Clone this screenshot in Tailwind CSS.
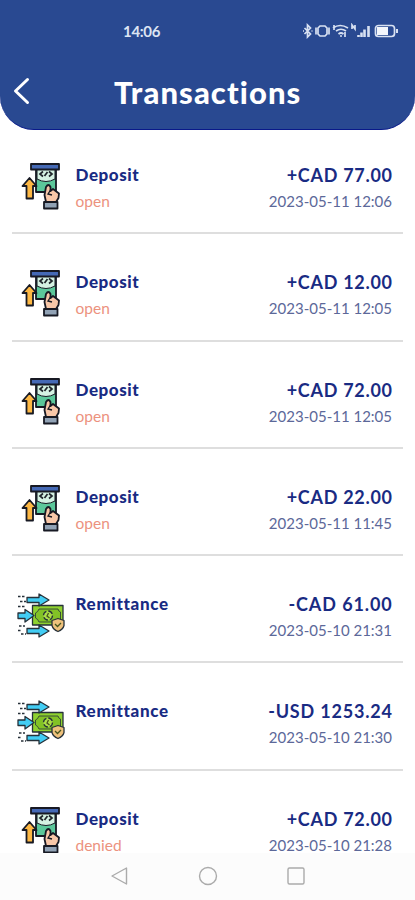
<!DOCTYPE html>
<html lang="en">
<head>
<meta charset="utf-8">
<meta name="viewport" content="width=device-width, initial-scale=1">
<title>Transactions</title>
<script src="https://cdn.jsdelivr.net/npm/@tailwindcss/browser@4"></script>
</head>
<body class="bg-white font-['Lato',sans-serif] [font-variant-ligatures:none]">
<svg class="hidden">
  <symbol id="deposit" viewBox="0 0 48 50">
    <g stroke="#171923" stroke-width="1.800" stroke-linejoin="round">
      <path d="M16 7H36V31H16Z" fill="#5bc79a"/>
      <path d="M17 8H35V18Q26 23 17 18Z" fill="#d5f2e3" stroke-width="1"/>
      <path d="M11 3H39V8.500H11Z" fill="#4569b5"/>
      <path d="M9.500 17L16.500 25H13V37.500H6.500V25H2.500Z" fill="#fdb844"/>
      <path d="M26 41L24.500 34L26 26Q28.500 22 30.500 26V30L33 28L39 32.500L38.500 37L36 41Z" fill="#f8c7a8"/>
      <path d="M24 41H37.500V47.500H24Z" fill="#91a2b5"/>
    </g>
    <path d="M23 10.500L20 13L23 15.500M29 10.500L32 13L29 15.500M24.500 15L27.500 11" fill="none" stroke="#20252b" stroke-width="1.700"/>
    <path d="M30.500 29L28 33L32 34" fill="none" stroke="#171923" stroke-width="1.300"/>
  </symbol>
  <symbol id="remit" viewBox="0 0 48 46">
    <g stroke="#26313a" stroke-width="1.300" stroke-linejoin="round">
      <path d="M15.500 13.500H46V33H15.500Z" fill="#8fd12f"/>
      <path d="M22 17H41Q41.500 19.500 43.500 20V27Q41 27 39.500 30H22Q21 27 18.500 26V21Q21 20 22 17Z" fill="#82c226" stroke-width=".8"/>
      <circle cx="31" cy="23.500" r="4.500" fill="#acdf48" stroke-dasharray="5 2"/>
      <path d="M10 5.500H22V2L32 8L22 14V10.500H10Z" fill="#42cdf4"/>
      <path d="M1 21H8V17.500L17 23.500L8 30V26.500H1Z" fill="#42cdf4"/>
      <path d="M10 36.500H22V33L32 39L22 45V41.500H10Z" fill="#42cdf4"/>
      <path d="M35 28.500L41 26.500L47 28.500V33.500Q46 37.500 41 39.500Q36 37.500 35 33.500Z" fill="#eec17c"/>
    </g>
    <path d="M31.500 21L30 24L32.500 26M38 32L40.500 34.500L44 31" fill="none" stroke="#47551d" stroke-width="1.300"/>
    <path d="M1 4.500H8M3 9.500H9M1 14.500H8M2 34H8M1 38.500H4M4 42H9" fill="none" stroke="#273039" stroke-width="1.400" stroke-dasharray="2.500 1.500"/>
  </symbol>
</svg>

<div class="relative h-[900px] w-[415px] overflow-hidden bg-white text-[#192b83]">
  <header class="h-[130px] rounded-b-[34px] border-b border-[#09198a] bg-[#294991] text-white">
    <div class="flex h-[61px] items-center justify-between pl-[123px] pr-[17px]">
      <span class="text-[15px] font-bold leading-[20px] tracking-[-0.3px] text-[#dce4f3]">14:06</span>
      <svg class="h-[16px] w-[96px]" viewBox="302 0 96 16" fill="none" stroke="#d8e1f2" stroke-width="1.700">
        <path d="M304.500 5L310.500 11L307.500 14V2L310.500 5L304.500 11M303 8H304M311.500 8H312.500"/>
        <path d="M320 3H325L327 5V11L325 13H320L318 11V5ZM316 4.500V11.500M329 4.500V11.500"/>
        <path d="M333 5Q340 0 348 5M336 8Q341 4.500 346 8M338.500 11Q341 9 343.500 11M334 2V7M345 9V14"/>
        <path d="M340 13H342M352 6V2L355 6V2"/>
        <path d="M358.500 14V12M361.500 14V9.500M364.500 14V6.500M368.500 14V3" stroke-width="2.600"/>
        <rect x="375.500" y="2.500" width="19" height="11" rx="3"/>
        <path d="M377 4H388V12H377Z" fill="#f3f6fc" stroke="none"/><path d="M397 6V10" stroke-width="2"/>
      </svg>
    </div>
    <div class="flex h-[62px] items-center">
      <svg class="ml-[11px] h-[30px] w-[20px]" viewBox="0 0 20 30" fill="none" stroke="white" stroke-width="3" stroke-linecap="round" stroke-linejoin="round"><path d="M16.500 2.500L4.500 14L16.500 25.500"/></svg>
      <h1 class="ml-[83px] whitespace-nowrap text-[31px] font-black leading-[40px] tracking-[1.100px]">Transactions</h1>
    </div>
  </header>

  <main class="-mt-[3px] px-[12px]">
    <section class="flex h-[107.300px] justify-between border-b-2 border-[#dedede] pl-[8px] pr-[11px] pt-[35px]">
      <div class="flex"><svg class="-mt-px h-[50px] w-[48px]"><use href="#deposit"/></svg>
        <div class="ml-[7.500px]"><h2 class="text-[17px] font-black leading-[26px] tracking-[0.550px]">Deposit</h2><p class="text-[15.500px] leading-[26px] text-[#ec927e]">open</p></div></div>
      <div class="text-right"><p class="-mr-[0.700px] text-[18px] font-bold leading-[26px] tracking-[0.700px]">+CAD 77.00</p><p class="text-[15px] leading-[26px] text-[#5c6899]">2023-05-11 12:06</p></div>
    </section>
    <section class="flex h-[107.300px] justify-between border-b-2 border-[#dedede] pl-[8px] pr-[11px] pt-[35px]">
      <div class="flex"><svg class="-mt-px h-[50px] w-[48px]"><use href="#deposit"/></svg>
        <div class="ml-[7.500px]"><h2 class="text-[17px] font-black leading-[26px] tracking-[0.550px]">Deposit</h2><p class="text-[15.500px] leading-[26px] text-[#ec927e]">open</p></div></div>
      <div class="text-right"><p class="-mr-[0.700px] text-[18px] font-bold leading-[26px] tracking-[0.700px]">+CAD 12.00</p><p class="text-[15px] leading-[26px] text-[#5c6899]">2023-05-11 12:05</p></div>
    </section>
    <section class="flex h-[107.300px] justify-between border-b-2 border-[#dedede] pl-[8px] pr-[11px] pt-[35px]">
      <div class="flex"><svg class="-mt-px h-[50px] w-[48px]"><use href="#deposit"/></svg>
        <div class="ml-[7.500px]"><h2 class="text-[17px] font-black leading-[26px] tracking-[0.550px]">Deposit</h2><p class="text-[15.500px] leading-[26px] text-[#ec927e]">open</p></div></div>
      <div class="text-right"><p class="-mr-[0.700px] text-[18px] font-bold leading-[26px] tracking-[0.700px]">+CAD 72.00</p><p class="text-[15px] leading-[26px] text-[#5c6899]">2023-05-11 12:05</p></div>
    </section>
    <section class="flex h-[107.300px] justify-between border-b-2 border-[#dedede] pl-[8px] pr-[11px] pt-[35px]">
      <div class="flex"><svg class="-mt-px h-[50px] w-[48px]"><use href="#deposit"/></svg>
        <div class="ml-[7.500px]"><h2 class="text-[17px] font-black leading-[26px] tracking-[0.550px]">Deposit</h2><p class="text-[15.500px] leading-[26px] text-[#ec927e]">open</p></div></div>
      <div class="text-right"><p class="-mr-[0.700px] text-[18px] font-bold leading-[26px] tracking-[0.700px]">+CAD 22.00</p><p class="text-[15px] leading-[26px] text-[#5c6899]">2023-05-11 11:45</p></div>
    </section>
    <section class="flex h-[107.300px] justify-between border-b-2 border-[#dedede] pl-[5px] pr-[11px] pt-[35px]">
      <div class="flex"><svg class="mt-px h-[46px] w-[48px]"><use href="#remit"/></svg>
        <h2 class="ml-[10.500px] text-[17px] font-black leading-[26px] tracking-[0.650px]">Remittance</h2></div>
      <div class="text-right"><p class="-mr-[0.700px] text-[18px] font-bold leading-[26px] tracking-[0.900px]">-CAD 61.00</p><p class="text-[15px] leading-[26px] text-[#5c6899]">2023-05-10 21:31</p></div>
    </section>
    <section class="flex h-[107.300px] justify-between border-b-2 border-[#dedede] pl-[5px] pr-[11px] pt-[35px]">
      <div class="flex"><svg class="mt-px h-[46px] w-[48px]"><use href="#remit"/></svg>
        <h2 class="ml-[10.500px] text-[17px] font-black leading-[26px] tracking-[0.650px]">Remittance</h2></div>
      <div class="text-right"><p class="-mr-[0.700px] text-[18px] font-bold leading-[26px] tracking-[0.800px]">-USD 1253.24</p><p class="text-[15px] leading-[26px] text-[#5c6899]">2023-05-10 21:30</p></div>
    </section>
    <section class="flex h-[107.300px] justify-between pl-[8px] pr-[11px] pt-[35px]">
      <div class="flex"><svg class="-mt-px h-[50px] w-[48px]"><use href="#deposit"/></svg>
        <div class="ml-[7.500px]"><h2 class="text-[17px] font-black leading-[26px] tracking-[0.550px]">Deposit</h2><p class="text-[15.500px] leading-[26px] text-[#ec927e]">denied</p></div></div>
      <div class="text-right"><p class="-mr-[0.700px] text-[18px] font-bold leading-[26px] tracking-[0.700px]">+CAD 72.00</p><p class="text-[15px] leading-[26px] text-[#5c6899]">2023-05-10 21:28</p></div>
    </section>
  </main>

  <nav class="absolute inset-x-0 bottom-0 flex h-[47px] justify-between bg-[#fcfcfc] pl-[110px] pr-[109px] pt-[13px]">
    <svg class="size-[20px]" viewBox="0 0 20 20" fill="none" stroke="#ababab" stroke-width="1.400" stroke-linejoin="round"><path d="M16.500 2V18L2 10Z"/></svg>
    <svg class="size-[20px]" viewBox="0 0 20 20" fill="none" stroke="#ababab" stroke-width="1.400"><circle cx="10" cy="10" r="8.500"/></svg>
    <svg class="size-[20px]" viewBox="0 0 20 20" fill="none" stroke="#ababab" stroke-width="1.400"><rect x="2" y="2" width="16" height="16" rx="1.500"/></svg>
  </nav>
</div>
</body>
</html>
